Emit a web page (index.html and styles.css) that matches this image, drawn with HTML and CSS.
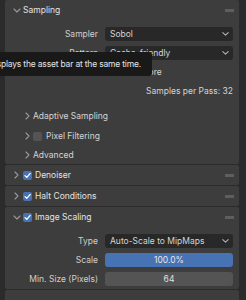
FILE: index.html
```html
<!DOCTYPE html>
<html>
<head>
<meta charset="utf-8">
<link rel="stylesheet" href="styles.css">
</head>
<body>
<div class="region">
  <section class="panel">
    <div class="phead">
      <span class="chev"><svg width="8" height="5" viewBox="0 0 8 5"><path d="M1 1 L4 4 L7 1" /></svg></span>
      <span class="ptitle">Sampling</span>
      <span class="grip"></span>
    </div>
    <div class="pbody">
      <div class="row">
        <span class="lbl">Sampler</span>
        <div class="menu"><span>Sobol</span><svg width="7" height="4" viewBox="0 0 7 4"><path d="M0.8 0.6 L3.5 3.2 L6.2 0.6" /></svg></div>
      </div>
      <div class="row">
        <span class="lbl">Pattern</span>
        <div class="menu"><span>Cache-friendly</span><svg width="7" height="4" viewBox="0 0 7 4"><path d="M0.8 0.6 L3.5 3.2 L6.2 0.6" /></svg></div>
      </div>
      <div class="row">
        <span class="lbl"></span>
        <div class="check-line"><span class="cb"></span><span class="cbtext">Out of Core</span></div>
      </div>
      <div class="row">
        <span class="lbl"></span>
        <div class="info">Samples per Pass: 32</div>
      </div>
      <div class="sub first">
        <span class="chev sm"><svg width="5" height="8" viewBox="0 0 5 8"><path d="M1 1 L4 4 L1 7" /></svg></span>
        <span class="stitle">Adaptive Sampling</span>
      </div>
      <div class="sub">
        <span class="chev sm"><svg width="5" height="8" viewBox="0 0 5 8"><path d="M1 1 L4 4 L1 7" /></svg></span>
        <span class="cb off"></span>
        <span class="stitle">Pixel Filtering</span>
      </div>
      <div class="sub last">
        <span class="chev sm"><svg width="5" height="8" viewBox="0 0 5 8"><path d="M1 1 L4 4 L1 7" /></svg></span>
        <span class="stitle">Advanced</span>
      </div>
    </div>
  </section>

  <section class="panel">
    <div class="phead">
      <span class="chev"><svg width="5" height="8" viewBox="0 0 5 8"><path d="M1 1 L4 4 L1 7" /></svg></span>
      <span class="cb on"><svg width="9" height="9" viewBox="0 0 9 9"><path d="M2 4.6 L3.8 6.4 L7.2 2.4" /></svg></span>
      <span class="ptitle">Denoiser</span>
      <span class="grip"></span>
    </div>
  </section>

  <section class="panel">
    <div class="phead">
      <span class="chev"><svg width="5" height="8" viewBox="0 0 5 8"><path d="M1 1 L4 4 L1 7" /></svg></span>
      <span class="cb on"><svg width="9" height="9" viewBox="0 0 9 9"><path d="M2 4.6 L3.8 6.4 L7.2 2.4" /></svg></span>
      <span class="ptitle">Halt Conditions</span>
      <span class="grip"></span>
    </div>
  </section>

  <section class="panel">
    <div class="phead">
      <span class="chev"><svg width="8" height="5" viewBox="0 0 8 5"><path d="M1 1 L4 4 L7 1" /></svg></span>
      <span class="cb on"><svg width="9" height="9" viewBox="0 0 9 9"><path d="M2 4.6 L3.8 6.4 L7.2 2.4" /></svg></span>
      <span class="ptitle">Image Scaling</span>
      <span class="grip"></span>
    </div>
    <div class="pbody tight">
      <div class="row">
        <span class="lbl">Type</span>
        <div class="menu"><span>Auto-Scale to MipMaps</span><svg width="7" height="4" viewBox="0 0 7 4"><path d="M0.8 0.6 L3.5 3.2 L6.2 0.6" /></svg></div>
      </div>
      <div class="row">
        <span class="lbl">Scale</span>
        <div class="slider">100.0%</div>
      </div>
      <div class="row">
        <span class="lbl">Min. Size (Pixels)</span>
        <div class="num">64</div>
      </div>
    </div>
  </section>

  <section class="panel">
    <div class="phead"></div>
  </section>
</div>

<div class="tooltip">Displays the asset bar at the same time.</div>
</body>
</html>
```

FILE: styles.css
```css
html, body {
  margin: 0;
  padding: 0;
}
body {
  width: 246px;
  height: 300px;
  overflow: hidden;
  background: #2b2b2b;
  font-family: "Inter", "DejaVu Sans", sans-serif;
  font-size: 8.5px;
  color: #d4d4d4;
  position: relative;
}
.region {
  padding: 0 7px 0 5px;
  display: flex;
  flex-direction: column;
  gap: 1px;
}
.panel {
  background: #3d3d3d;
  border-radius: 2px;
}
.phead {
  height: 20px;
  display: flex;
  align-items: center;
  padding-left: 6px;
  padding-right: 4px;
}
.chev {
  width: 11px;
  height: 20px;
  display: flex;
  align-items: center;
  justify-content: center;
  flex: none;
}
.chev svg path {
  fill: none;
  stroke: #9a9a9a;
  stroke-width: 1.1;
  stroke-linecap: round;
  stroke-linejoin: round;
}
.ptitle {
  color: #e2e2e2;
  margin-left: 1px;
}
.phead .cb {
  margin-left: 1px;
  margin-right: 2px;
}
.grip {
  margin-left: auto;
  width: 9px;
  height: 3px;
  background-image: radial-gradient(circle, #707070 0.6px, transparent 0.9px);
  background-size: 2px 2px;
  margin-right: 1px;
}
.pbody {
  padding: 4px 0 0 0;
}
.row {
  height: 19px;
  display: flex;
  align-items: center;
}
.lbl {
  width: 93px;
  flex: none;
  text-align: right;
  color: #cfcfcf;
  padding-right: 7px;
  white-space: nowrap;
}
.menu, .slider, .num {
  width: 128px;
  height: 14px;
  border-radius: 3px;
  box-sizing: border-box;
  display: flex;
  align-items: center;
}
.menu {
  background: #282828;
  padding: 0 2px 0 5px;
  justify-content: space-between;
  color: #d4d4d4;
}
.menu svg path {
  fill: none;
  stroke: #b0b0b0;
  stroke-width: 1.1;
  stroke-linecap: round;
  stroke-linejoin: round;
}
.menu svg {
  margin-right: 2px;
}
.slider {
  background: #4772b3;
  justify-content: center;
  color: #e6e6e6;
}
.num {
  background: #545454;
  justify-content: center;
  color: #e0e0e0;
}
.check-line {
  display: flex;
  align-items: center;
  gap: 1px;
}
.cbtext {
  color: #d4d4d4;
}
.info {
  width: 128px;
  text-align: right;
  color: #d4d4d4;
}
.cb {
  width: 9px;
  height: 9px;
  border-radius: 2px;
  background: #545454;
  flex: none;
  display: block;
}
.cb.on {
  background: #4772b3;
}
.cb svg {
  display: block;
}
.cb svg path {
  fill: none;
  stroke: #ffffff;
  stroke-width: 1.3;
  stroke-linecap: round;
  stroke-linejoin: round;
}
.sub {
  height: 20px;
  display: flex;
  align-items: center;
  padding-left: 17px;
}
.sub.first {
  margin-top: 6px;
}
.sub.last {
  height: 18px;
}
.sub .cb {
  margin-right: 4px;
}
.stitle {
  color: #d4d4d4;
}
.pbody.tight {
  padding-top: 4px;
  padding-bottom: 1px;
}
.tooltip {
  position: absolute;
  right: 94px;
  top: 52px;
  height: 24px;
  line-height: 24px;
  padding: 0 11px 0 8px;
  background: #191919;
  color: #e4e4e4;
  white-space: nowrap;
  border-radius: 3px;
  letter-spacing: -0.19px;
}
```
